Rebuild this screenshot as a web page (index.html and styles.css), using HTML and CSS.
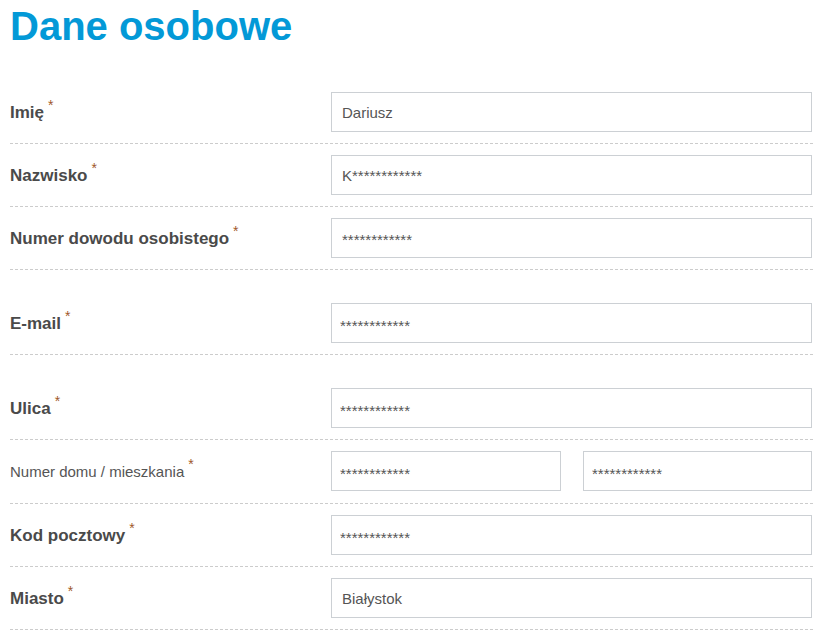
FILE: index.html
```html
<!DOCTYPE html>
<html lang="pl">
<head>
<meta charset="utf-8">
<title>Dane osobowe</title>
<link rel="stylesheet" href="styles.css">
</head>
<body>
<div class="page">
  <h1 class="title">Dane osobowe</h1>
  <form class="form">
    <div class="row">
      <label class="label">Imię<span class="req">*</span></label>
      <div class="field"><input class="input" type="text" value="Dariusz"></div>
    </div>
    <div class="row">
      <label class="label">Nazwisko<span class="req">*</span></label>
      <div class="field"><input class="input" type="text" value="K************"></div>
    </div>
    <div class="row">
      <label class="label">Numer dowodu osobistego<span class="req">*</span></label>
      <div class="field"><input class="input input-stars" type="text" value="************"></div>
    </div>
    <div class="row row-spaced">
      <label class="label">E-mail<span class="req">*</span></label>
      <div class="field"><input class="input input-alt" type="text" value="************"></div>
    </div>
    <div class="row row-spaced">
      <label class="label">Ulica<span class="req">*</span></label>
      <div class="field"><input class="input input-alt" type="text" value="************"></div>
    </div>
    <div class="row row-double">
      <label class="label label-light">Numer domu / mieszkania<span class="req">*</span></label>
      <div class="field field-split">
        <input class="input input-alt" type="text" value="************">
        <input class="input input-alt" type="text" value="************">
      </div>
    </div>
    <div class="row">
      <label class="label">Kod pocztowy<span class="req">*</span></label>
      <div class="field"><input class="input input-alt" type="text" value="************"></div>
    </div>
    <div class="row">
      <label class="label">Miasto<span class="req">*</span></label>
      <div class="field"><input class="input" type="text" value="Białystok"></div>
    </div>
  </form>
</div>
</body>
</html>
```

FILE: styles.css
```css
* {
  box-sizing: border-box;
}

html, body {
  margin: 0;
  padding: 0;
  background: #ffffff;
}

body {
  font-family: "Liberation Sans", Arial, sans-serif;
  color: #444444;
}

.page {
  padding-left: 10px;
  width: 813px;
}

.title {
  margin: 3px 0 32px;
  font-size: 40px;
  line-height: 46px;
  font-weight: bold;
  color: #0399d7;
}

.form {
  margin: 0;
}

.row {
  display: grid;
  grid-template-columns: 321px 481px;
  align-items: center;
  padding: 11px 0;
  border-bottom: 1px dashed #cccccc;
}

.row-spaced {
  padding-top: 33px;
}

.row-double {
  padding-bottom: 12px;
}

.label {
  font-size: 17px;
  font-weight: bold;
  color: #4a4a4a;
  line-height: 19px;
}

.label-light {
  font-size: 15px;
  font-weight: normal;
  color: #555555;
}

.req {
  display: inline-block;
  margin-left: 4px;
  font-size: 14px;
  font-weight: normal;
  line-height: 0;
  vertical-align: 8px;
  color: #a0582a;
}

.field {
  display: flex;
}

.field-split {
  display: grid;
  grid-template-columns: 230px 229px;
  column-gap: 22px;
}

.input {
  width: 100%;
  height: 40px;
  margin: 0;
  padding: 0 10px;
  border: 1px solid #ccd0d4;
  border-radius: 0;
  background: #ffffff;
  font-family: "Liberation Sans", Arial, sans-serif;
  font-size: 15px;
  color: #555555;
  outline: none;
}

.input-stars {
  padding-top: 3px;
}

.input-alt {
  padding: 4px 8px 0;
}
```
